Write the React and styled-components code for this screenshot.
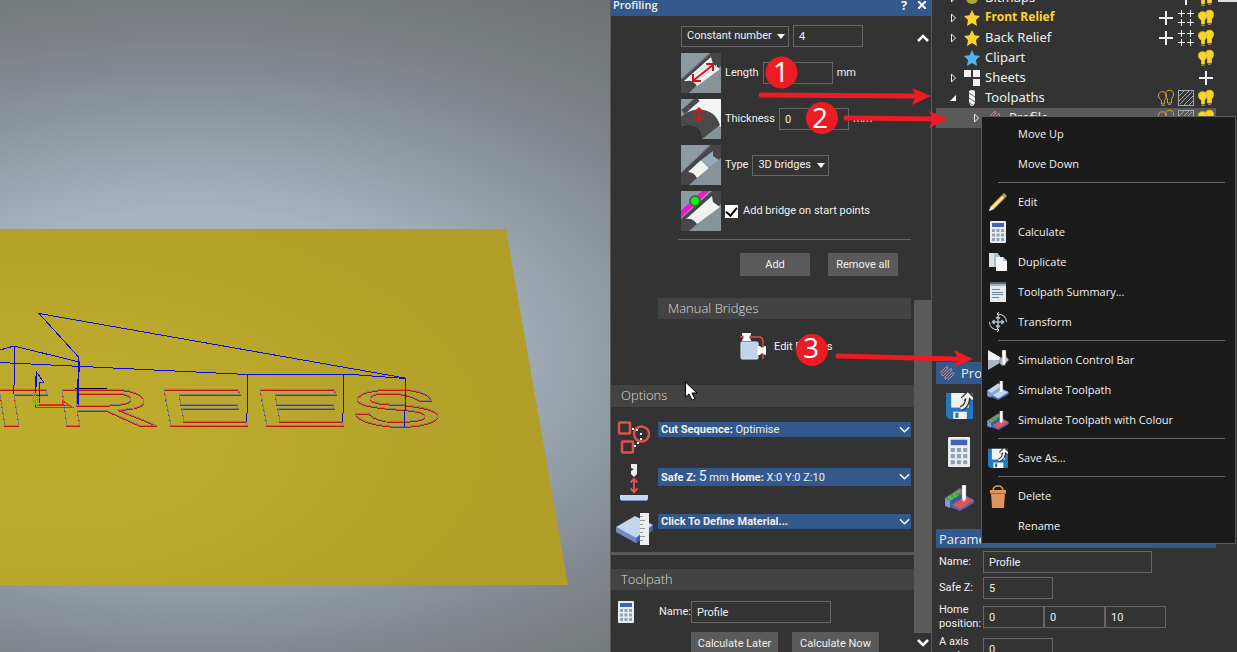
/**
 * External Dependencies
 */
import { useState } from 'react'
import styled, { createGlobalStyle, css } from 'styled-components'

const GlobalStyle = createGlobalStyle`
    * {
        box-sizing: border-box;
    }
    body {
        margin: 0;
        background: #333;
        color: #f0f0f0;
        font: 11px/14px Roboto, "Open Sans", sans-serif;
        overflow: hidden;
    }
    button, input, select {
        font: inherit;
        color: inherit;
        margin: 0;
    }
    svg {
        display: block;
        flex: none;
    }
`

/**
 * Layout
 */
const Workspace = styled.div`
    display: flex;
    height: 100vh;
    overflow: hidden;
`

const Viewport = styled.main`
    flex: 1;
    min-width: 0;
    background: #757b7c;

    svg {
        width: 100%;
        height: 100%;
    }
`

const Panels = styled.div`
    position: relative;
    display: flex;
    flex: none;
`

const ProfilingPanel = styled.section`
    display: flex;
    flex-direction: column;
    width: 322px;
    border: solid #5a5a5a;
    border-width: 0 1px;
`

const PanelHeader = styled.header`
    display: flex;
    align-items: center;
    flex: none;
    height: 16px;
    padding: 0 0 6px 2px;
    background: #33588b;
    font: 600 12px/10px "Open Sans", sans-serif;

    h1 {
        flex: 1;
        margin: 0;
        font: inherit;
        font-size: 11px;
    }
`

const HeaderButton = styled.button`
    width: 18px;
    padding: 0;
    border: 0;
    background: none;
    font-weight: 700;
    font-size: 13px;
    line-height: 10px;

    svg {
        margin: 0 auto;
    }
`

const PanelBody = styled.div`
    display: flex;
    flex: 1;
    min-height: 0;
`

const PanelContent = styled.div`
    flex: 1;
    min-width: 0;
    overflow: hidden;
`

/**
 * Scrollbar
 */
const Scrollbar = styled.div`
    display: flex;
    flex-direction: column;
    width: 17px;
    padding-top: 12px;
`

const ScrollButton = styled.button`
    display: flex;
    align-items: center;
    justify-content: center;
    height: 19px;
    padding: 0;
    border: 0;
    background: #333;
`

const ScrollTrack = styled.div`
    flex: 253;
`

const ScrollThumb = styled.div`
    flex: 333;
    background: #5a5a5a;
`

/**
 * Form parts
 */
const BridgeForm = styled.div`
    display: flex;
    flex-direction: column;
    gap: 6px;
    margin: 0 3px 0 67px;
    padding: 9px 0 8px 3px;
    border-bottom: 1px solid #666;
`

const FormRow = styled.div`
    display: flex;
    align-items: center;
    gap: 4px;
`

const TextInput = styled.input`
    width: ${props => props.$width || 70}px;
    height: 22px;
    padding: 0 5px;
    border: 1px solid #666;
    background: #333;
    outline: 0;
`

const SelectBox = styled.span`
    display: inline-flex;
    align-items: center;
    position: relative;

    svg {
        position: absolute;
        right: 4px;
        pointer-events: none;
    }
`

const Select = styled.select`
    width: ${props => props.$width}px;
    height: 21px;
    padding: 0 5px;
    border: 1px solid #666;
    background: #333;
    appearance: none;
    outline: 0;
`

const CheckLabel = styled.label`
    display: flex;
    align-items: center;
    gap: 5px;
`

const Checkbox = styled.input`
    appearance: none;
    display: grid;
    place-items: center;
    width: 13px;
    height: 13px;
    margin: 0;
    background: #fff;

    &:checked::after {
        content: '';
        width: 5px;
        height: 9px;
        margin-bottom: 2px;
        border: solid #000;
        border-width: 0 2px 2px 0;
        transform: rotate(40deg);
    }
`

const PushButton = styled.button`
    width: ${props => props.$width || 70}px;
    height: 23px;
    padding: 0;
    border: 0;
    background: #5a5a5a;
`

const BridgeButtons = styled.div`
    display: flex;
    justify-content: flex-end;
    gap: 18px;
    padding: 13px 16px 22px 0;
`

const SectionTitle = styled.h2`
    display: flex;
    align-items: center;
    height: 22px;
    margin: 0;
    padding: 0 0 2px 10px;
    background: #434343;
    color: #dcdcdc;
    font: 300 13px/16px "Open Sans", sans-serif;
`

const SubTitle = styled(SectionTitle)`
    height: 21px;
    margin: 0 3px 0 47px;
`

const ToolpathTitle = styled(SectionTitle)`
    height: 21px;
    margin-top: 14px;
`

const EditBridges = styled.button`
    display: flex;
    align-items: center;
    gap: 8px;
    margin: 14px 0 25px 129px;
    padding: 0;
    border: 0;
    background: none;
`

const OptionList = styled.div`
    padding-top: 14px;
    border-bottom: 3px solid #5a5a5a;
`

const Option = styled.div`
    display: grid;
    grid-template-columns: 42px 1fr;
    align-items: start;
    height: ${props => props.$height}px;
    padding: 0 3px 0 5px;
`

const OptionBar = styled.button`
    display: flex;
    align-items: center;
    justify-content: space-between;
    height: ${props => props.$tall ? 18 : 15}px;
    margin-top: ${props => props.$tall ? 4 : 1}px;
    padding: 0 1px 0 3px;
    border: 0;
    background: #33588b;
    text-align: left;

    b {
        font-weight: 700;
    }
    big {
        font-size: 14px;
        line-height: 14px;
    }
`

const ToolpathForm = styled.div`
    display: flex;
    align-items: flex-start;
    padding: 11px 0 0 7px;
`

const ToolpathFields = styled.div`
    display: grid;
    grid-template-columns: 32px auto;
    row-gap: 9px;
    align-items: center;
    margin-left: 25px;
`

const ToolpathButtons = styled.div`
    grid-column: 2;
    display: flex;
    gap: 14px;
`

/**
 * Project panel
 */
const ProjectPanel = styled.aside`
    position: relative;
    width: 305px;
    padding: 0 21px 0 4px;
    overflow: hidden;
`

const Tree = styled.ul`
    height: 374px;
    margin: -12px 0 0;
    padding: 0;
    list-style: none;
    font: 13px/18px "Noto Sans", "Open Sans", sans-serif;
`

const TreeRow = styled.li`
    display: flex;
    align-items: center;
    height: 20px;
    padding-left: ${props => props.$nested ? 34 : 11}px;
    ${props => props.$selected && css`background: #5a5a5a;`}
    ${props => props.$bold && css`
        color: #fdd42c;
        font-weight: 700;
        font-size: 12px;
    `}
`

const Twisty = styled.span`
    width: 12px;
    margin-right: 5px;
`

const TreeLabel = styled.span`
    flex: 1;
    padding: 0 0 2px 5px;
`

const TreeAction = styled.button`
    display: grid;
    place-items: center;
    width: 20px;
    height: 20px;
    padding: 0;
    border: 0;
    background: none;
`

const BlueTitle = styled.h2`
    display: flex;
    align-items: center;
    gap: 5px;
    height: ${props => props.$height}px;
    margin: 0;
    padding-left: 3px;
    background: #33588b;
    font: 13px/18px "Open Sans", sans-serif;
`

const ToolStrip = styled.div`
    display: flex;
    flex-direction: column;
    gap: 1px;
    width: 46px;
    margin-bottom: 8px;
`

const ToolButton = styled.button`
    display: grid;
    place-items: center;
    height: 45px;
    padding: 0 0 2px;
    border: 0;
    background: none;
`

const Parameters = styled.div`
    display: grid;
    grid-template-columns: 44px 1fr;
    gap: 4px 0;
    align-items: center;
    padding: 3px 0 0 3px;
`

const Triple = styled.div`
    display: flex;
`

const WindowCorner = styled.div`
    position: absolute;
    top: 0;
    right: 0;
    width: 19px;
    height: 2px;
    background: #ddd;
`

/**
 * Context menu
 */
const Menu = styled.div`
    position: absolute;
    top: 116px;
    left: 49px;
    right: 1px;
    padding: 2px 0;
    border: 1px solid #5a5a5a;
    background: #1b1b1b;
    font-family: "Open Sans", sans-serif;
`

const MenuItem = styled.button`
    display: flex;
    align-items: center;
    width: 100%;
    height: 30px;
    padding: 0;
    border: 0;
    background: none;
    text-align: left;

    &:hover {
        background: #333;
    }
`

const MenuIcon = styled.span`
    display: grid;
    place-items: center;
    width: 32px;
    margin-right: 4px;
`

const MenuSeparator = styled.hr`
    height: 8px;
    margin: 0 10px 0 16px;
    border: 0;
    background: linear-gradient(#666, #666) 0 3px / 100% 1px no-repeat;
`

const Overlay = styled.svg`
    position: absolute;
    top: 0;
    left: 0;
    pointer-events: none;

    text {
        fill: #fff;
        font: 28px "Open Sans", sans-serif;
        text-anchor: middle;
    }
`

/**
 * Icons
 */
const DropArrow = () => (
    <svg width="8" height="5" viewBox="0 0 8 5"><path d="M0 0h8L4 5z" fill="#fff" /></svg>
)

const Chevron = ({ up, width = 11, stroke = 2 }) => (
    <svg width={width} height="8" viewBox="0 0 12 8">
        <path d={up ? 'M1 7l5-5 5 5' : 'M1 1l5 5 5-5'} fill="none" stroke="#fff" strokeWidth={stroke} />
    </svg>
)

const BridgeBase = ({ children }) => (
    <svg width="40" height="40" viewBox="0 0 40 40">
        <rect width="40" height="40" fill="#8e9aa2" />
        <path d="M0 40L40 6V40z" fill="#87939b" />
        <path d="M5 8h1v1h-1zM12 5h1v1h-1zM18 9h1v1h-1zM8 16h1v1h-1zM24 34h1v1h-1zM31 29h1v1h-1zM34 36h1v1h-1zM36 24h1v1h-1zM27 37h1v1h-1z" fill="#b5a34c" />
        {children}
    </svg>
)

const LengthIcon = () => (
    <BridgeBase>
        <path d="M0 26L29 0h11v13L16 32 8 40H0z" fill="#48484b" />
        <path d="M3 28L30 4l2 7 7 5L16 33q-4-6-10-5z" fill="#f0f3f1" />
        <path d="M9 26L31 7M14 30L36 12" stroke="#c3d4cf" />
        <path d="M1 26L29 1" stroke="#6c747b" />
        <path d="M13 27L32 12M12 21v7h8M25 11h7v7" fill="none" stroke="#d3131b" strokeWidth="2" />
    </BridgeBase>
)

const ThicknessIcon = () => (
    <BridgeBase>
        <path d="M17 0h23v28L7 13z" fill="#f3f5f4" />
        <path d="M0 18C12 6 34 8 39 26L21 40C22 28 12 24 0 27z" fill="#4a4a4c" />
        <path d="M0 27C12 24 22 28 21 40H0z" fill="#333" />
        <path d="M2 13L17 0" stroke="#4a4a4c" strokeWidth="5" />
        <path d="M18 10v11M13 14l5-5 5 5M13 17l5 5 5-5" fill="none" stroke="#e3131b" strokeWidth="1.500" />
    </BridgeBase>
)

const TypeIcon = () => (
    <BridgeBase>
        <path d="M0 28L29 0h11v13L16 33 8 40H0z" fill="#47474a" />
        <path d="M7 27l13-12 8 8-12 10q-3-6-9-6z" fill="#f1f3f1" />
        <path d="M20 15l12-9 0 5 6 4-10 8z" fill="#93abba" />
        <path d="M2 26L29 1" stroke="#6c747b" />
    </BridgeBase>
)

const StartPointIcon = () => (
    <BridgeBase>
        <path d="M0 28L31 0h9v13L16 33 8 40H0z" fill="#47474a" />
        <path d="M5 28L31 5l1 6 7 5L16 33q-4-6-11-5z" fill="#f1f3f1" />
        <path d="M-2 25L27-2" stroke="#fb10d8" strokeWidth="5" />
        <circle cx="14" cy="10" r="5" fill="#00fb00" stroke="#3c5644" strokeWidth="1.500" />
    </BridgeBase>
)

const EditBridgesIcon = () => (
    <svg width="26" height="27" viewBox="0 0 26 27">
        <path d="M0 4h19q4 0 4 5v17" fill="none" stroke="#e24b4b" strokeWidth="1.500" />
        <rect x="1" y="9" width="17" height="17" rx="1" fill="#c0d3ea" stroke="#dfe8f2" />
        <path d="M2 0h9v2L9 4l2 3v1H2V7l2-3-2-2zM18 13h2l2 2 3-2h1v9h-1l-3-2-2 2h-2z" fill="#fff" />
    </svg>
)

const SequenceIcon = () => (
    <svg width="34" height="34" viewBox="0 0 34 34" fill="none" stroke="#e0504f" strokeWidth="2.500">
        <rect x="3" y="1.500" width="11" height="11" rx="1" />
        <rect x="6" y="20.500" width="11" height="11" rx="1" />
        <circle cx="25.500" cy="13" r="7.500" />
        <path d="M16 8h2M20 9h2M24 13h2M24 18h2M21 22h2M18 25h2" stroke="#fff" strokeWidth="2" />
    </svg>
)

const SafeZIcon = () => (
    <svg width="34" height="38" viewBox="0 0 34 38">
        <path d="M15 0h6v10l-3 3-3-3V7l3-2-3-1z" fill="#f0f0f0" />
        <path d="M18 15v13M14.500 18.500l3.500-3.500 3.500 3.500M14.500 24.500l3.500 3.500 3.500-3.500" fill="none" stroke="#e0504f" strokeWidth="2" />
        <path d="M4 31h28v4q-1 2-3 2H7q-2 0-3-2z" fill="#c4d6ee" />
        <path d="M5 36.500h26" stroke="#7d93c7" />
    </svg>
)

const MaterialIcon = () => (
    <svg width="37" height="33" viewBox="0 0 37 33">
        <path d="M0 14l20 11 17-13v5L20 30 0 19z" fill="#7488d0" />
        <path d="M0 14L19 3l18 9-17 13z" fill="#c4d6ee" />
        <path d="M20 25l17-13v5L20 30z" fill="#4263b4" />
        <rect x="24" width="9" height="32" fill="#eee" />
        <path d="M24 3.500h3M24 7.500h5M24 11.500h3M24 15.500h5M24 19.500h3M24 23.500h5M24 27.500h3" stroke="#999" />
    </svg>
)

const CalculatorIcon = ({ width = 16, height = 22 }) => (
    <svg width={width} height={height} viewBox="0 0 16 22" preserveAspectRatio="none">
        <rect width="16" height="22" rx="1" fill="#e9eef3" />
        <rect x="2" y="2" width="12" height="4" fill="#4561b4" />
        <path d="M2 8h3v3H2zM6.500 8h3v3h-3zM11 8h3v3h-3zM2 12.500h3v3H2zM6.500 12.500h3v3h-3zM11 12.500h3v3h-3zM2 17h3v3H2zM6.500 17h3v3h-3zM11 17h3v3h-3z" fill="#93a1b4" />
    </svg>
)

const PencilIcon = () => (
    <svg width="18" height="18" viewBox="0 0 18 18">
        <path d="M0 18l2-5 3 3z" fill="#e8eaec" />
        <path d="M2 13L13 2l3 3L5 16z" fill="#e9c445" />
        <path d="M3.500 14.500l11-11" stroke="#fdf3c4" strokeWidth="1.500" />
        <path d="M0 18l2-5 3 3z" fill="#e8eaec" />
        <path d="M13 2l2-2 3 3-2 2z" fill="#c98787" />
    </svg>
)

const DuplicateIcon = () => (
    <svg width="18" height="18" viewBox="0 0 18 18">
        <path d="M0 0h9v14H0z" fill="#dfe2d6" />
        <path d="M5 0h3l3 3v11H5z" fill="#a9bfd8" />
        <path d="M7 4h7l4 4v10H7z" fill="#f3f5f6" />
        <path d="M14 4l4 4h-4z" fill="#a9bfd8" />
    </svg>
)

const SummaryIcon = () => (
    <svg width="16" height="20" viewBox="0 0 16 20">
        <rect y="1" width="16" height="19" fill="#e6eaec" />
        <path d="M0 0h16v2H0z" fill="#5b6570" />
        <path d="M0 3h16" stroke="#a3b2c2" strokeWidth="2" />
        <path d="M2 7.500h8M2 10.500h11M2 12.500h11M2 15.500h7" stroke="#76879b" />
    </svg>
)

const TransformIcon = () => (
    <svg width="18" height="20" viewBox="0 0 18 20" fill="none" stroke="#dbe0e4">
        <path d="M9 4.500v11M3.500 10h11M7 6.500l2-2 2 2M7 13.500l2 2 2-2M5.500 8l-2 2 2 2M12.500 8l2 2-2 2" stroke="#aebccb" strokeWidth="1.500" />
        <path d="M8 2q9 0 9.500 8M10 18Q1 18 .500 10" />
        <path d="M10 0L8 2l2 2M8 16l2 2-2 2" />
    </svg>
)

const ControlBarIcon = () => (
    <svg width="22" height="20" viewBox="0 0 22 20">
        <path d="M1 0l17 10H1z" fill="#f0f3f5" />
        <path d="M1 10h17L1 20z" fill="#a8b8c2" />
        <path d="M13 8l6-2 3 4-6 6-3-2z" fill="#c2d0e3" stroke="#333" strokeWidth=".5" />
        <path d="M15 0h4v13l-2 3-2-3z" fill="#fff" stroke="#555" strokeWidth=".5" />
    </svg>
)

const SimulateIcon = ({ colour, width = 22, height = 19 }) => (
    <svg width={width} height={height} viewBox="0 0 29 26">
        <path d="M0 13l15-6 14 8v3L15 26 0 20z" fill="#4b68bc" />
        <path d="M5 18l12-7 12 4-14 9z" fill={colour ? '#e25555' : '#c4d6ee'} />
        <path d="M0 13L15 3l3 2v4L5 17z" fill={colour ? '#777' : '#c4d6ee'} />
        <path d="M5 16l13-8v5L5 21z" fill={colour ? '#3f58a6' : '#8ea3d8'} />
        <path d="M0 13l5 3v7l-5-2z" fill="#8398dc" />
        {colour && <path d="M3 13l3-1.500M8 10l3-1.500M12 7.500l3-1.500M5 14.500l3-1.500M9 12l3-1.500" stroke="#2ee82e" strokeWidth="1.500" />}
        <path d="M17 0h4v14l-2 3-2-3z" fill="#fff" stroke="#999" strokeWidth=".5" />
    </svg>
)

const SaveIcon = ({ width = 20, height = 20 }) => (
    <svg width={width} height={height} viewBox="0 0 26 26">
        <path d="M0 1h26v25H3l-3-3z" fill="#2876c2" />
        <path d="M5 1h17v14H5z" fill="#eef2f4" />
        <path d="M7 19h13v7H7z" fill="#f2f2f2" />
        <path d="M9 20h3v5H9z" fill="#2876c2" />
        <path d="M14 16q7-2 7-12M16 7l5-5 5 5" fill="none" stroke="#333" strokeWidth="5" />
        <path d="M14 16q7-2 7-12M16 7l5-5 5 5" fill="none" stroke="#f4f4f4" strokeWidth="2.500" />
    </svg>
)

const BucketIcon = () => (
    <svg width="16" height="23" viewBox="0 0 16 23">
        <path d="M3 6q0-5 5-5t5 5" fill="none" stroke="#e0945c" strokeWidth="1.500" />
        <path d="M0 5h16v3H0z" fill="#e0945c" />
        <path d="M1 8h14l-1 15H2z" fill="#e0945c" />
        <path d="M0 8.500h16" stroke="#a56437" />
    </svg>
)

const StarIcon = ({ fill = '#fdd42c' }) => (
    <svg width="16" height="16" viewBox="0 0 16 16">
        <path d="M8 0l2.500 5.300 5.500.7-4 4 1 6-5-3-5 3 1-6-4-4 5.500-.7z" fill={fill} />
    </svg>
)

const BitmapIcon = () => (
    <svg width="16" height="16" viewBox="0 0 16 16">
        <circle cx="8" cy="8" r="6" fill="#b9a528" />
        <path d="M4 9h2M8 9h2M5 11h2M9 11h2" stroke="#59c93c" />
    </svg>
)

const SheetsIcon = () => (
    <svg width="16" height="16" viewBox="0 0 16 16">
        <path d="M0 0h7v7H0zM9 0h7v7H9zM9 9h7v7H9z" fill="#f0f0f0" />
    </svg>
)

const DrillIcon = () => (
    <svg width="16" height="16" viewBox="0 0 16 16">
        <path d="M5 1q3-2 6 0v12l-2 3H7l-2-3z" fill="#f4f4f4" />
        <path d="M5 3l6 4M5 8l6 4M5 12.500l4 3" stroke="#666" />
    </svg>
)

const ProfileIcon = () => (
    <svg width="17" height="17" viewBox="0 0 17 17">
        <path d="M1 8l6-6q2-1 2 1l-6 6q-1 2 1 2l7-7q2-1 2 1l-7 7q-1 2 1 2l6-6q2-1 2 1l-6 6" fill="none" stroke="#d98a86" />
    </svg>
)

const PlusIcon = () => (
    <svg width="14" height="14" viewBox="0 0 14 14"><path d="M7 0v14M0 7h14" stroke="#eee" strokeWidth="2" /></svg>
)

const GridIcon = () => (
    <svg width="16" height="16" viewBox="0 0 16 16">
        <path d="M3.500 0v7M0 3.500h7M12.500 0v7M9 3.500h7M3.500 9v7M0 12.500h7M12.500 9v7M9 12.500h7" stroke="#e4e8ec" />
    </svg>
)

const BulbsIcon = ({ off }) => (
    <svg width="16" height="18" viewBox="0 0 16 18" fill={off ? 'none' : '#fbd625'} stroke={off ? '#d2a92c' : '#e0bb1c'}>
        <path d="M7.500 5.500a4 4 0 0 1 8-.5q0 3-2 5v4h-4v-4q-2-2-2-4.500z" />
        <path d="M.500 7a4 4 0 0 1 8-.5q0 3-2 5V15h-3v-3.500Q.500 9.500.500 7z" />
        <path d="M3 16.500h4M10 15.500h3" stroke="#8a7c86" />
    </svg>
)

const HatchIcon = () => (
    <svg width="16" height="16" viewBox="0 0 16 16" stroke="#a4a9b0" fill="none">
        <rect x=".5" y=".5" width="15" height="15" />
        <path d="M1 6l5-5M1 11L11 1M2 14L14 2M6 15l9-9M11 15l4-4" />
    </svg>
)

const TwistyIcon = ({ open }) => (
    <svg width="12" height="12" viewBox="0 0 12 12">
        {open
            ? <path d="M9 3v6H3z" fill="#fff" />
            : <path d="M4.500 2l4 4-4 4z" fill="none" stroke="#eee" />
        }
    </svg>
)

/**
 * 3D view
 */
const letters = [
    'M-2 389H46l1 5H14l5 31.500H5L0 394',
    'M62 389h48c22 0 34 6 34 12c0 5-8 8-26 8.500L157 425.500h-17L106 410H77l3 15.500H67zM76 393h37c12 0 18 3 18 6c0 4-8 5.500-21 6L77 406z',
    'M164 389h74l2 5h-61l2 10.500h56l1 4h-56l2 13h62l1 4h-76z',
    'M260 389h74l2 5h-61l2 10.500h56l1 4h-56l2 13h62l1 4h-76z',
    'M431.500 400H419C411 395 402 393 388 393S370 396 370 399C372 404 390 404 405 405C425 407 438 411 438 416C436 423 418 426.500 400 426.500C375 426 357 420 356 413.500H369C375 420 385 421.500 395 421.500C412 421.500 425 420 425 416C424 410 405 410 390 408.500C375 407 357 405 357 399C360 391 380 389 398 389S430 394 431.500 400z',
]

const ReliefView = () => (
    <Viewport>
        <svg viewBox="0 0 610 652" preserveAspectRatio="xMinYMin slice" role="img" aria-label="3D view">
            <defs>
                <radialGradient id="sky" gradientUnits="userSpaceOnUse" cx="0" cy="0" r="1" gradientTransform="translate(190 360) scale(860 468)">
                    <stop offset=".32" stopColor="#a6b3c0" />
                    <stop offset=".42" stopColor="#9ba6b0" />
                    <stop offset=".54" stopColor="#8c959c" />
                    <stop offset=".64" stopColor="#83878f" />
                    <stop offset=".77" stopColor="#767b7d" />
                    <stop offset="1" stopColor="#6a6d6f" />
                </radialGradient>
                <radialGradient id="plate" gradientUnits="userSpaceOnUse" cx="0" cy="0" r="1" gradientTransform="translate(60 440) scale(460 250)">
                    <stop offset="0" stopColor="#bfad2d" />
                    <stop offset=".5" stopColor="#b9a82c" />
                    <stop offset="1" stopColor="#b09e28" />
                </radialGradient>
            </defs>
            <rect width="610" height="652" fill="url(#sky)" />
            <path d="M0 229H506L568 585H0z" fill="url(#plate)" />
            <g fill="none" shapeRendering="crispEdges">
                <g stroke="#c4121a" transform="translate(0 1)">
                    {letters.map(d => <path key={d} d={d} />)}
                </g>
                <g stroke="#81817a">
                    {letters.map(d => <path key={d} d={d} />)}
                </g>
                <path d="M75 388.500h32" stroke="#000" />
                <path d="M405 378L39 313.500 78.500 357V405M0 350l14-4 65 16M14.500 346v30l-1 18M0 362.500L247 374.500H352L405 378.500V410l-1 17M247.500 374v30l-1 18M343.500 374v30l-1 18" stroke="#0a0ae6" />
                <path d="M79 361v11M78 379v25" stroke="#0a0ae6" strokeWidth="2" />
                <path d="M35.500 407V376M36.500 387V372l7 10h-4v21" stroke="#0a0ae6" />
                <path d="M35 407.500h38l-11-7v4H39M37 405.500h34" stroke="#ee2222" />
                <path d="M33.500 391v10l3 4M35.500 393v12M37.500 396v8M35 397h6" stroke="#1fe01f" />
            </g>
        </svg>
    </Viewport>
)

/**
 * Profiling panel
 */
const Profiling = () => {
    const [ onStart, setOnStart ] = useState(true)

    return (
        <ProfilingPanel>
            <PanelHeader>
                <h1>Profiling</h1>
                <HeaderButton aria-label="Help">?</HeaderButton>
                <HeaderButton aria-label="Close">
                    <svg width="8" height="8" viewBox="0 0 8 8"><path d="M0 0l8 8M8 0L0 8" stroke="#fff" strokeWidth="2" /></svg>
                </HeaderButton>
            </PanelHeader>
            <PanelBody>
                <PanelContent>
                    <BridgeForm>
                        <FormRow>
                            <SelectBox>
                                <Select $width={108} aria-label="Bridge mode"><option>Constant number</option></Select>
                                <DropArrow />
                            </SelectBox>
                            <TextInput defaultValue="4" aria-label="Number of bridges" />
                        </FormRow>
                        <FormRow>
                            <LengthIcon />
                            <label htmlFor="length">Length</label>
                            <TextInput id="length" />
                            <span>mm</span>
                        </FormRow>
                        <FormRow>
                            <ThicknessIcon />
                            <label htmlFor="thickness">Thickness</label>
                            <TextInput id="thickness" defaultValue="0" />
                            <span>mm</span>
                        </FormRow>
                        <FormRow>
                            <TypeIcon />
                            <label htmlFor="type">Type</label>
                            <SelectBox>
                                <Select id="type" $width={77}><option>3D bridges</option></Select>
                                <DropArrow />
                            </SelectBox>
                        </FormRow>
                        <FormRow>
                            <StartPointIcon />
                            <CheckLabel>
                                <Checkbox type="checkbox" checked={onStart} onChange={() => setOnStart(!onStart)} />
                                Add bridge on start points
                            </CheckLabel>
                        </FormRow>
                    </BridgeForm>
                    <BridgeButtons>
                        <PushButton>Add</PushButton>
                        <PushButton>Remove all</PushButton>
                    </BridgeButtons>
                    <SubTitle>Manual Bridges</SubTitle>
                    <EditBridges><EditBridgesIcon /> Edit Bridges</EditBridges>

                    <SectionTitle>Options</SectionTitle>
                    <OptionList>
                        <Option $height={43}>
                            <SequenceIcon />
                            <OptionBar><span><b>Cut Sequence:</b> Optimise</span><Chevron stroke={1.5} /></OptionBar>
                        </Option>
                        <Option $height={49}>
                            <SafeZIcon />
                            <OptionBar $tall><span><b>Safe Z:</b> <big>5</big> mm <b>Home:</b> X:0 Y:0 Z:10</span><Chevron stroke={1.5} /></OptionBar>
                        </Option>
                        <Option $height={39}>
                            <MaterialIcon />
                            <OptionBar><b>Click To Define Material...</b><Chevron stroke={1.5} /></OptionBar>
                        </Option>
                    </OptionList>

                    <ToolpathTitle>Toolpath</ToolpathTitle>
                    <ToolpathForm>
                        <CalculatorIcon />
                        <ToolpathFields>
                            <label htmlFor="toolpath-name">Name:</label>
                            <TextInput id="toolpath-name" $width={140} defaultValue="Profile" />
                            <ToolpathButtons>
                                <PushButton $width={87}>Calculate Later</PushButton>
                                <PushButton $width={87}>Calculate Now</PushButton>
                            </ToolpathButtons>
                        </ToolpathFields>
                    </ToolpathForm>
                </PanelContent>
                <Scrollbar>
                    <ScrollButton aria-label="Scroll up"><Chevron up width={12} stroke={2.5} /></ScrollButton>
                    <ScrollTrack />
                    <ScrollThumb />
                    <ScrollButton aria-label="Scroll down"><Chevron width={12} stroke={2.5} /></ScrollButton>
                </Scrollbar>
            </PanelBody>
        </ProfilingPanel>
    )
}

/**
 * Project tree, tools and parameters
 */
const treeRows = [
    { label: 'Bitmaps', icon: <BitmapIcon />, closed: true, actions: [ 'plus', 'bulbs' ] },
    { label: 'Front Relief', icon: <StarIcon />, closed: true, bold: true, actions: [ 'plus', 'grid', 'bulbs' ] },
    { label: 'Back Relief', icon: <StarIcon />, closed: true, actions: [ 'plus', 'grid', 'bulbs' ] },
    { label: 'Clipart', icon: <StarIcon fill="#4fb2ee" />, actions: [ 'bulbs' ] },
    { label: 'Sheets', icon: <SheetsIcon />, closed: true, actions: [ 'plus' ] },
    { label: 'Toolpaths', icon: <DrillIcon />, open: true, actions: [ 'off', 'hatch', 'bulbs' ] },
    { label: 'Profile', icon: <ProfileIcon />, closed: true, nested: true, actions: [ 'off', 'hatch', 'bulbs' ] },
]

const actionIcons = {
    plus: <PlusIcon />,
    grid: <GridIcon />,
    bulbs: <BulbsIcon />,
    off: <BulbsIcon off />,
    hatch: <HatchIcon />,
}

const menuItems = [
    { label: 'Move Up' },
    { label: 'Move Down' },
    null,
    { label: 'Edit', icon: <PencilIcon /> },
    { label: 'Calculate', icon: <CalculatorIcon /> },
    { label: 'Duplicate', icon: <DuplicateIcon /> },
    { label: 'Toolpath Summary...', icon: <SummaryIcon /> },
    { label: 'Transform', icon: <TransformIcon /> },
    null,
    { label: 'Simulation Control Bar', icon: <ControlBarIcon /> },
    { label: 'Simulate Toolpath', icon: <SimulateIcon /> },
    { label: 'Simulate Toolpath with Colour', icon: <SimulateIcon colour /> },
    null,
    { label: 'Save As...', icon: <SaveIcon /> },
    null,
    { label: 'Delete', icon: <BucketIcon /> },
    { label: 'Rename' },
]

const ContextMenu = () => (
    <Menu role="menu">
        {menuItems.map((item, i) => item
            ? <MenuItem key={item.label} role="menuitem"><MenuIcon>{item.icon}</MenuIcon>{item.label}</MenuItem>
            : <MenuSeparator key={i} />
        )}
    </Menu>
)

const Project = () => (
    <ProjectPanel>
        <WindowCorner />
        <Tree>
            {treeRows.map(row => (
                <TreeRow key={row.label} $nested={row.nested} $selected={row.nested} $bold={row.bold}>
                    <Twisty>{(row.closed || row.open) && <TwistyIcon open={row.open} />}</Twisty>
                    {row.icon}
                    <TreeLabel>{row.label}</TreeLabel>
                    {row.actions.map(name => <TreeAction key={name} aria-label={`${row.label} ${name}`}>{actionIcons[name]}</TreeAction>)}
                </TreeRow>
            ))}
        </Tree>
        <BlueTitle $height={22}><ProfileIcon /> Profile</BlueTitle>
        <ToolStrip>
            <ToolButton aria-label="Save as"><SaveIcon width={27} height={27} /></ToolButton>
            <ToolButton aria-label="Calculate"><CalculatorIcon width={22} height={30} /></ToolButton>
            <ToolButton aria-label="Simulate"><SimulateIcon colour width={29} height={26} /></ToolButton>
        </ToolStrip>
        <BlueTitle $height={19}>Parameters</BlueTitle>
        <Parameters>
            <label htmlFor="name">Name:</label>
            <TextInput id="name" $width={169} defaultValue="Profile" />
            <label htmlFor="safe-z">Safe Z:</label>
            <TextInput id="safe-z" defaultValue="5" />
            <label htmlFor="home-x">Home position:</label>
            <Triple>
                <TextInput id="home-x" $width={61} defaultValue="0" />
                <TextInput $width={61} defaultValue="0" aria-label="Home Y" />
                <TextInput $width={61} defaultValue="10" aria-label="Home Z" />
            </Triple>
            <label htmlFor="a-axis">A axis angle:</label>
            <TextInput id="a-axis" defaultValue="0" />
        </Parameters>
        <ContextMenu />
    </ProjectPanel>
)

// Numbered steps with arrows drawn over both panels, plus the pointer
const Annotations = () => (
    <Overlay width="627" height="652" viewBox="0 0 627 652">
        <g stroke="#ed1c24" strokeWidth="5" strokeLinecap="round">
            <path d="M151 95L305 96" />
            <path d="M236 118L324 119" />
            <path d="M228 356L346 359" />
        </g>
        <g fill="#ed1c24">
            <path d="M321 96l-19-8 4 8-4 9zM338 119l-19-8 4 8-4 9zM363 359l-19-9 4 9-4 8z" />
            <circle cx="171.500" cy="72.500" r="16" />
            <circle cx="212" cy="118" r="16" />
            <circle cx="202" cy="350" r="16" />
        </g>
        <text x="171" y="82">1</text>
        <text x="210" y="128">2</text>
        <text x="201" y="358">3</text>
        <path d="M75.500 382v15l3.500-3 3 6 3-1-3-6h5z" fill="#fff" stroke="#000" />
    </Overlay>
)

const App = () => (
    <>
        <GlobalStyle />
        <Workspace>
            <ReliefView />
            <Panels>
                <Profiling />
                <Project />
                <Annotations />
            </Panels>
        </Workspace>
    </>
)

export default App
